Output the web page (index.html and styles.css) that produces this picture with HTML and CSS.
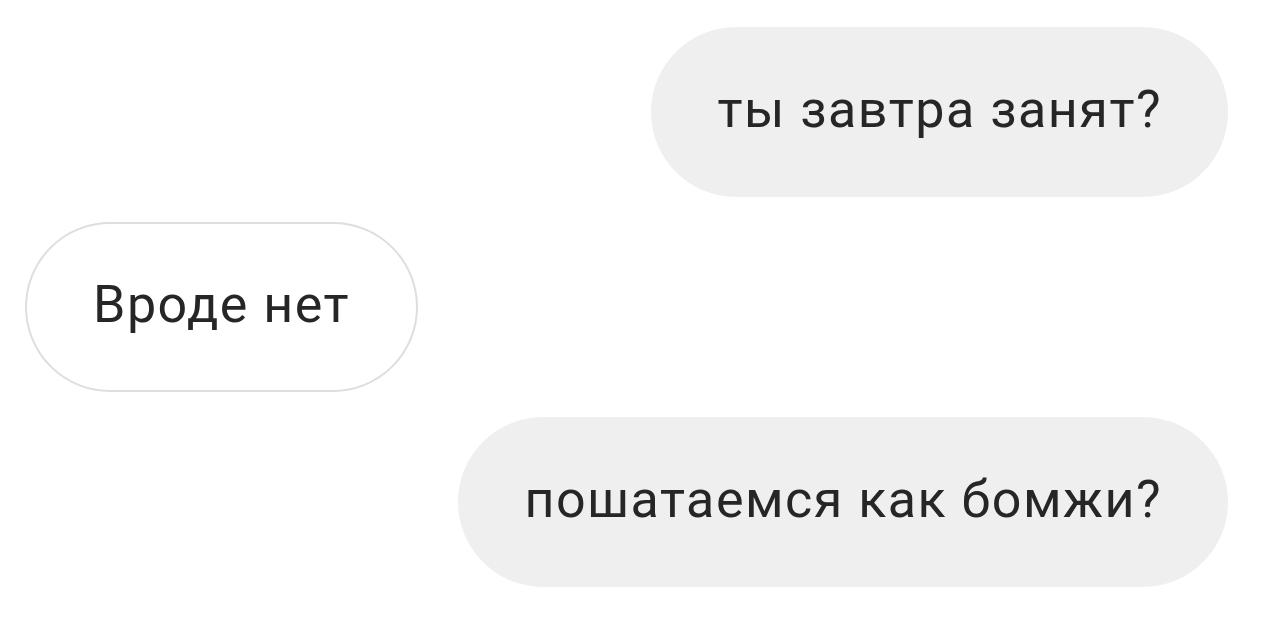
FILE: index.html
```html
<!DOCTYPE html>
<html lang="ru">
<head>
<meta charset="UTF-8">
<meta name="viewport" content="width=device-width, initial-scale=1.0">
<title>Чат</title>
<link rel="stylesheet" href="styles.css">
</head>
<body>
<div class="chat">
  <div class="message outgoing">ты завтра занят?</div>
  <div class="message incoming">Вроде нет</div>
  <div class="message outgoing">пошатаемся как бомжи?</div>
</div>
</body>
</html>
```

FILE: styles.css
```css
body {
  margin: 0;
  background: #fff;
  font-family: Roboto, "Noto Sans", sans-serif;
  color: #262626;
}

.chat {
  display: flex;
  flex-direction: column;
  gap: 25px;
  padding: 27px 34px 0 25px;
}

.message {
  box-sizing: border-box;
  height: 170px;
  display: flex;
  align-items: center;
  padding: 0 66px 4px;
  border-radius: 85px;
  font-size: 52px;
  letter-spacing: 1.5px;
  line-height: 1;
}

.outgoing {
  align-self: flex-end;
  background: #efefef;
}

.incoming {
  align-self: flex-start;
  background: #fff;
  border: 2px solid #dedede;
}
```
